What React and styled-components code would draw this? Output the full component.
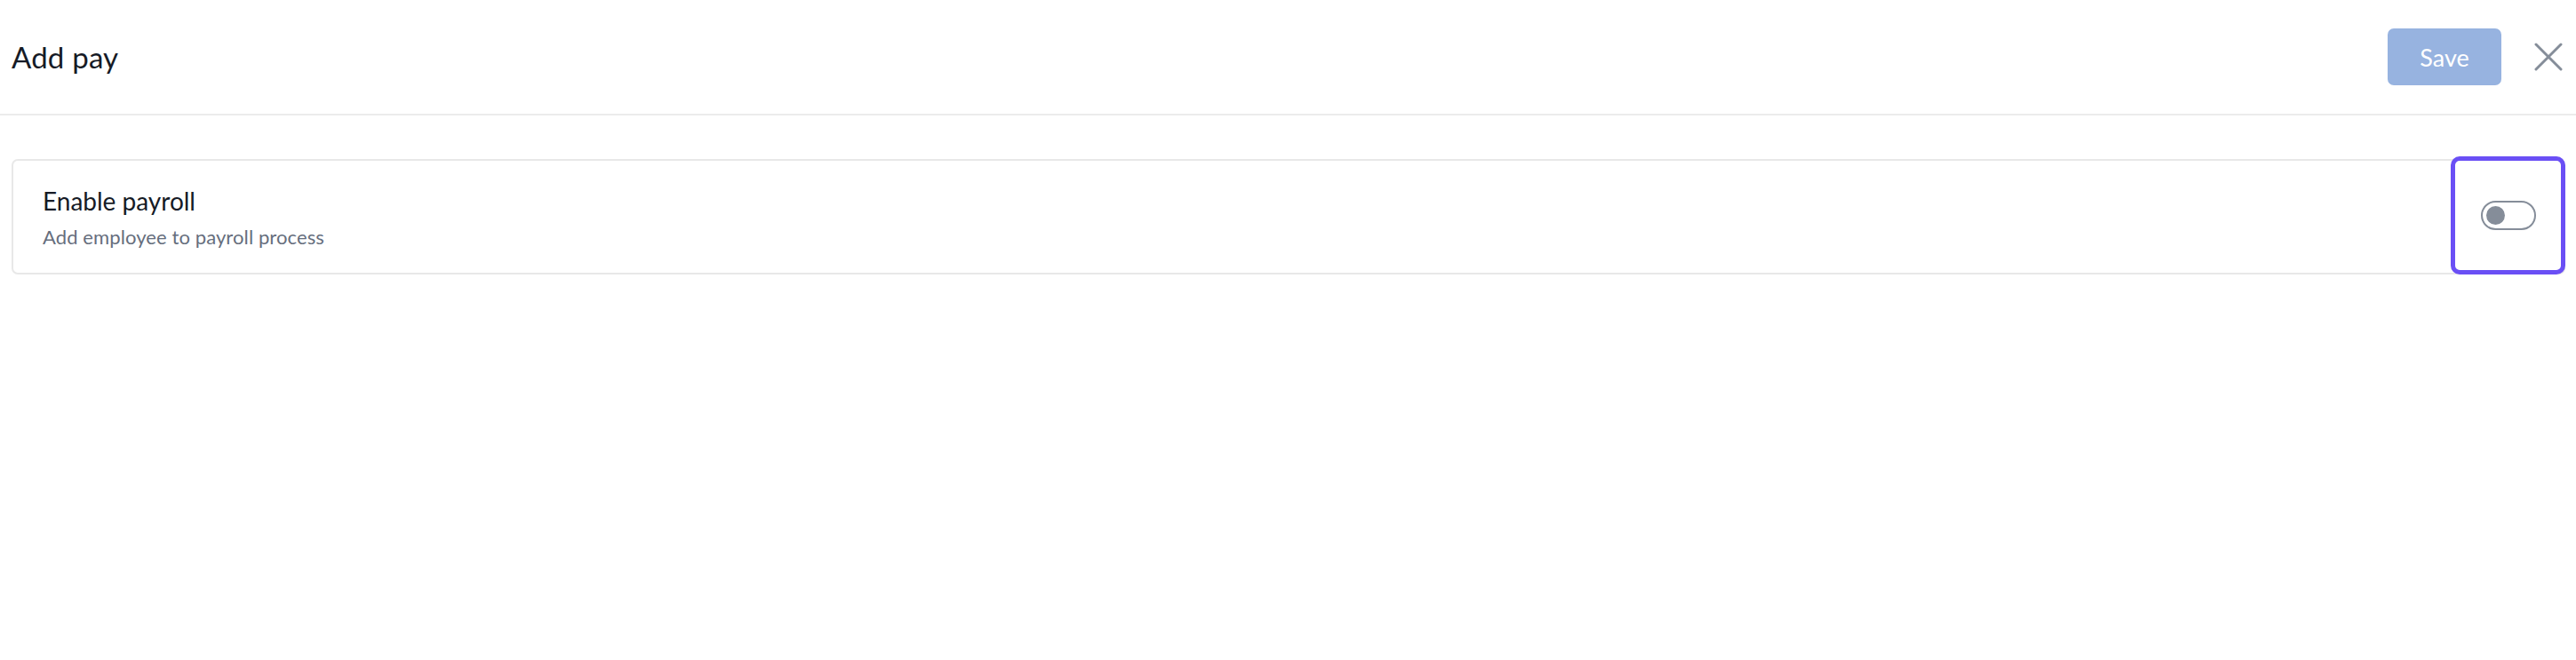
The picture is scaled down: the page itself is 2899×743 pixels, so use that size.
import React from 'react';
import styled, { createGlobalStyle } from 'styled-components';

const GlobalStyle = createGlobalStyle`
  html, body {
    margin: 0;
    padding: 0;
    background: #ffffff;
  }
  body {
    font-family: Lato, "Open Sans", sans-serif;
    color: #1a202c;
  }
`;

const Page = styled.div`
  width: 2899px;
  min-height: 743px;
  background: #ffffff;
`;

const Header = styled.header`
  height: 128px;
  display: flex;
  align-items: center;
  justify-content: space-between;
  padding: 0 15px 0 13px;
  border-bottom: 2px solid #ebebeb;
  box-sizing: content-box;
`;

const Title = styled.h1`
  margin: 0;
  font-size: 33px;
  font-weight: 400;
  color: #161b26;
  letter-spacing: 0.2px;
`;

const Actions = styled.div`
  display: flex;
  align-items: center;
  gap: 37px;
`;

const SaveButton = styled.button`
  width: 128px;
  height: 64px;
  border: none;
  border-radius: 7px;
  background: #97b3e0;
  color: #ffffff;
  font-family: inherit;
  font-size: 27px;
  font-weight: 400;
  cursor: not-allowed;
`;

const CloseButton = styled.button`
  display: flex;
  padding: 0;
  border: none;
  background: none;
  cursor: pointer;
`;

const Content = styled.main`
  padding: 49px 12px 0 13px;
`;

const Card = styled.section`
  height: 130px;
  box-sizing: border-box;
  display: flex;
  align-items: stretch;
  justify-content: space-between;
  border: 2px solid #e8e8e8;
  border-radius: 7px;
`;

const CardText = styled.div`
  display: flex;
  flex-direction: column;
  justify-content: center;
  gap: 10px;
  padding: 2px 0 0 33px;
`;

const Label = styled.div`
  font-size: 28px;
  color: #161b26;
  line-height: 34px;
`;

const Hint = styled.div`
  font-size: 22px;
  color: #666e7d;
  line-height: 28px;
  letter-spacing: 0.1px;
`;

const ToggleCell = styled.div`
  width: 129px;
  margin: -5px -2px -2px 0;
  box-sizing: border-box;
  border: 5px solid #6a4ff5;
  border-radius: 10px;
  display: flex;
  align-items: center;
  justify-content: center;
`;

const Track = styled.button`
  width: 62px;
  height: 33px;
  box-sizing: border-box;
  padding: 0 0 0 4px;
  border: 2px solid #858d99;
  border-radius: 17px;
  background: #ffffff;
  display: flex;
  align-items: center;
  justify-content: ${p => (p.$on ? 'flex-end' : 'flex-start')};
`;

const Knob = styled.span`
  width: 21px;
  height: 21px;
  border-radius: 50%;
  background: #858d99;
`;

const CloseIcon = () => (
  <svg width="32" height="32" viewBox="0 0 32 32">
    <path d="M2 2 L30 30 M30 2 L2 30" stroke="#858d99" strokeWidth="3" strokeLinecap="round" fill="none" />
  </svg>
);

export default function App() {
  return (
    <Page>
      <GlobalStyle />
      <Header>
        <Title>Add pay</Title>
        <Actions>
          <SaveButton disabled>Save</SaveButton>
          <CloseButton aria-label="Close"><CloseIcon /></CloseButton>
        </Actions>
      </Header>
      <Content>
        <Card>
          <CardText>
            <Label>Enable payroll</Label>
            <Hint>Add employee to payroll process</Hint>
          </CardText>
          <ToggleCell>
            <Track aria-label="Enable payroll" $on={false}><Knob /></Track>
          </ToggleCell>
        </Card>
      </Content>
    </Page>
  );
}
